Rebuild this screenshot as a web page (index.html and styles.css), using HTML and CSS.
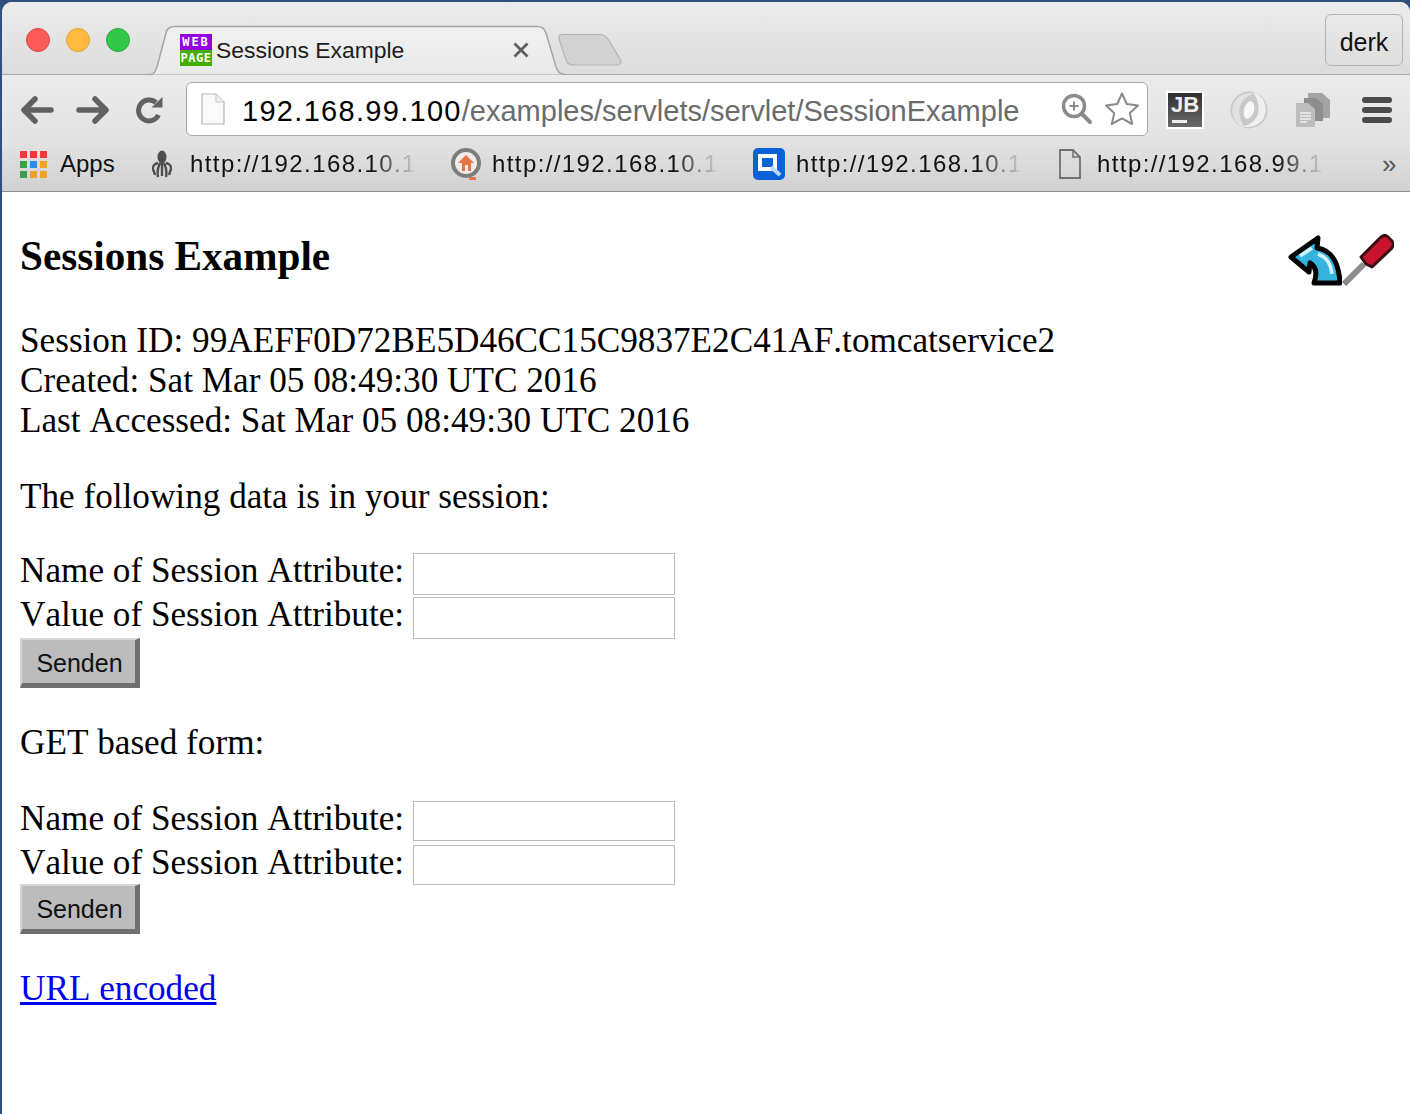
FILE: index.html
```html
<!DOCTYPE html>
<html lang="en">
<head>
    <meta charset="UTF-8">
    <title>Sessions Example</title>
    <link rel="stylesheet" href="styles.css">
</head>
<body>
<div class="window">
    <div class="tabstrip">
        <div class="lights">
            <span class="light red"></span>
            <span class="light yellow"></span>
            <span class="light green"></span>
        </div>
        <div class="tab">
            <svg class="tab-shape" width="416" height="51" viewBox="0 0 416 51">
                <path d="M0 49.500 H1 C5 49.500 6 47 8 42 L17 8 C18 3 21 1.500 26 1.500 H388 C393 1.500 395 3 397 8 L407 42 C409 47 411 49.500 416 49.500" fill="url(#tabfill)" stroke="#a5a5a5" stroke-width="1.500"/>
                <defs>
                    <linearGradient id="tabfill" x1="0" y1="0" x2="0" y2="1">
                        <stop offset="0" stop-color="#f1f1f1"/>
                        <stop offset="1" stop-color="#e9e9e9"/>
                    </linearGradient>
                </defs>
            </svg>
            <div class="favicon">
                <span class="fav-web">WEB</span>
                <span class="fav-page">PAGE</span>
            </div>
            <span class="tab-title">Sessions Example</span>
            <svg class="tab-close" width="16" height="16" viewBox="0 0 16 16">
                <path d="M1.500 1.500 L14.500 14.500 M14.500 1.500 L1.500 14.500" stroke="#5f5f5f" stroke-width="2.800"/>
            </svg>
        </div>
        <svg class="newtab" width="66" height="34" viewBox="0 0 66 34">
            <path d="M2 6 C1.500 3 3 1.500 6 1.500 H42 C47 1.500 49 3 51 6 L63 26 C65 30 63 32 60 32 H16 C12 32 10 30 9 27 Z" fill="#d2d2d2" stroke="#b2b2b2" stroke-width="1.200"/>
        </svg>
        <div class="profile">derk</div>
    </div>

    <div class="toolbar">
        <svg class="nav-icon" width="34" height="28" viewBox="0 0 34 28">
            <path d="M15 3 L4 14 L15 25 M5 14 H31" fill="none" stroke="#616161" stroke-width="5.500" stroke-linecap="round" stroke-linejoin="round"/>
        </svg>
        <svg class="nav-icon" width="34" height="28" viewBox="0 0 34 28">
            <path d="M19 3 L30 14 L19 25 M29 14 H3" fill="none" stroke="#616161" stroke-width="5.500" stroke-linecap="round" stroke-linejoin="round"/>
        </svg>
        <svg class="nav-icon" width="30" height="28" viewBox="0 0 30 28">
            <path d="M23.500 19 A10.500 10.500 0 1 1 21 6.500" fill="none" stroke="#616161" stroke-width="5"/>
            <path d="M16.500 11.500 L27.500 11.500 L27.500 1 Z" fill="#616161"/>
        </svg>
        <div class="omnibox">
            <svg class="omni-doc" width="24" height="32" viewBox="0 0 24 32">
                <path d="M1 1 H15 L23 9 V31 H1 Z" fill="#fafafa" stroke="#b5b5b5" stroke-width="1.200"/>
                <path d="M15 1 V9 H23" fill="#eee" stroke="#c5c5c5" stroke-width="1"/>
            </svg>
            <div class="url"><span class="host">192.168.99.100</span>/examples/servlets/servlet/SessionExample</div>
            <svg class="zoom-icon" width="32" height="32" viewBox="0 0 32 32">
                <circle cx="13" cy="13" r="10.500" fill="none" stroke="#8b8b8b" stroke-width="3.500"/>
                <path d="M21 21 L29 29" stroke="#8b8b8b" stroke-width="4" stroke-linecap="round"/>
                <path d="M13 8.500 V17.500 M8.500 13 H17.500" stroke="#8b8b8b" stroke-width="2"/>
            </svg>
            <svg class="star-icon" width="36" height="36" viewBox="0 0 36 36">
                <path d="M18 2.500 L22.800 13 L34 14.500 L25.800 22 L28.200 33 L18 27.400 L7.800 33 L10.200 22 L2 14.500 L13.200 13 Z" fill="#fff" stroke="#8a8a8a" stroke-width="2" stroke-linejoin="round"/>
            </svg>
        </div>
        <div class="extensions">
            <div class="ext-jb">
                <span class="jb-text">JB</span>
                <span class="jb-bar"></span>
            </div>
            <svg class="ext-json" width="38" height="38" viewBox="0 0 38 38">
                <circle cx="19" cy="19" r="18.500" fill="#c9c9c9"/>
                <path d="M23 1 C35 5 39 18 33 28 C29 34 20 38 12 35 C21 35 30 26 28.500 16 C28 10 26 5 23 1 Z" fill="#f0f0f0"/>
                <path d="M15 37 C3 33 -1 20 5 10 C9 4 18 0 26 3 C17 3 8 12 9.500 22 C10 28 12 33 15 37 Z" fill="#e2e2e2"/>
                <ellipse cx="19" cy="19" rx="5" ry="9" transform="rotate(15 19 19)" fill="#f7f7f7"/>
            </svg>
            <svg class="ext-copy" width="34" height="34" viewBox="0 0 34 34">
                <path d="M12 0 H26 L34 7 V25 H12 Z" fill="#a3a3a3"/>
                <path d="M8 5 H20 L27 11 V28 H8 Z" fill="#8e8e8e"/>
                <path d="M0 10 H12 L19 16 V34 H0 Z" fill="#bdbdbd"/>
                <path d="M4 20 H15 M4 23 H15 M4 26 H15 M4 29 H11" stroke="#eee" stroke-width="1.500"/>
            </svg>
            <div class="menu-icon"><span></span><span></span><span></span></div>
        </div>
    </div>

    <div class="bookmarks">
        <div class="bm bm-apps">
            <div class="apps-grid">
                <i class="c-r"></i><i class="c-r"></i><i class="c-r"></i>
                <i class="c-g"></i><i class="c-b"></i><i class="c-y"></i>
                <i class="c-g"></i><i class="c-y"></i><i class="c-y"></i>
            </div>
            <span>Apps</span>
        </div>
        <div class="bm bm-one">
            <svg width="20" height="28" viewBox="0 0 20 28">
                <ellipse cx="10" cy="7" rx="4.500" ry="6.500" fill="#4d4d4d"/>
                <path d="M6 13 C3 14 0.500 15 1 19 C1.500 22 3 22 2.500 25 M14 13 C17 14 19.500 15 19 19 C18.500 22 17 22 17.500 25 M8 13 C6 17 5 22 6 27 M12 13 C14 17 15 22 14 27 M10 12 V26" fill="none" stroke="#4d4d4d" stroke-width="2.400"/>
            </svg>
            <span class="bm-text">http://192.168.10.11</span>
        </div>
        <div class="bm bm-two">
            <svg width="32" height="34" viewBox="0 0 32 34">
                <circle cx="16" cy="16" r="13" fill="#f1ece8" stroke="#7d7d7d" stroke-width="4"/>
                <path d="M8 16 L16 8 L24 16 H21 V24 H18 V18 H15 V24 H12 V16 Z" fill="#e5744a"/>
                <path d="M19 30 H26 V33 H19 Z" fill="#e5744a"/>
            </svg>
            <span class="bm-text">http://192.168.10.11</span>
        </div>
        <div class="bm bm-three">
            <svg width="32" height="32" viewBox="0 0 32 32">
                <rect width="32" height="32" rx="5" fill="#0a62d8"/>
                <rect x="7" y="8" width="15" height="13" fill="none" stroke="#fff" stroke-width="4"/>
                <path d="M18 19 L27 27" stroke="#bcd6fa" stroke-width="4"/>
            </svg>
            <span class="bm-text">http://192.168.10.10</span>
        </div>
        <div class="bm bm-four">
            <svg width="22" height="30" viewBox="0 0 22 30">
                <path d="M1 1 H14 L21 8 V29 H1 Z" fill="none" stroke="#6f6f6f" stroke-width="1.800"/>
                <path d="M14 1 V8 H21" fill="none" stroke="#6f6f6f" stroke-width="1.500"/>
            </svg>
            <span class="bm-text">http://192.168.99.10</span>
        </div>
        <span class="bm-more">»</span>
    </div>

    <div class="page">
        <div class="icons">
            <svg width="54" height="52" viewBox="0 0 54 52">
                <path d="M3 23 L30 4 L29 14 C44 16 51 30 52 49 H26 C30 38 27 32 22 29 L21 38 Z" fill="#35b4df" stroke="#000" stroke-width="5" stroke-linejoin="round"/>
                <path d="M12 22 L24 14 M30 20 C38 23 43 30 44 40" fill="none" stroke="#d2f2fc" stroke-width="3.500"/>
            </svg>
            <svg width="52" height="52" viewBox="0 0 52 52">
                <path d="M2 50 L22 30" stroke="#8b8b8b" stroke-width="6"/>
                <path d="M19 23 L38 4 C41 1 44 1 46 3 L50 7 C52 10 52 12 49 15 L30 33 L24 30 Z" fill="#c8142c" stroke="#3a1015" stroke-width="3" stroke-linejoin="round"/>
            </svg>
        </div>
        <h1>Sessions Example</h1>
        <p class="info">Session ID: 99AEFF0D72BE5D46CC15C9837E2C41AF.tomcatservice2<br>Created: Sat Mar 05 08:49:30 UTC 2016<br>Last Accessed: Sat Mar 05 08:49:30 UTC 2016</p>
        <p class="note">The following data is in your session:</p>
        <form class="attr-form first" onsubmit="return false">
            <div class="row"><label>Name of Session Attribute:</label><input type="text"></div>
            <div class="row"><label>Value of Session Attribute:</label><input type="text"></div>
            <button type="submit">Senden</button>
        </form>
        <p class="note get-note">GET based form:</p>
        <form class="attr-form second" onsubmit="return false">
            <div class="row"><label>Name of Session Attribute:</label><input type="text"></div>
            <div class="row"><label>Value of Session Attribute:</label><input type="text"></div>
            <button type="submit">Senden</button>
        </form>
        <p class="link-line"><a href="#">URL encoded</a></p>
    </div>
</div>
</body>
</html>
```

FILE: styles.css
```css
html, body {
    margin: 0;
    padding: 0;
    height: 100%;
    overflow: hidden;
}
body {
    background-color: #2f4f7d; /* desktop behind the window */
    font-family: "Liberation Sans", Arial, sans-serif;
}
.window {
    margin: 2px 0 0 2px;
    height: 1112px;
    background-color: #fff;
    border-radius: 10px 10px 0 0;
    overflow: hidden;
}

/* Tab strip */
.tabstrip {
    height: 73px;
    display: flex;
    align-items: flex-start;
    position: relative;
    background: linear-gradient(#ececec, #dcdcdc);
    border-bottom: 1px solid #a9a9a9;
    box-sizing: border-box;
}
.lights {
    display: flex;
    gap: 16px;
    padding: 26px 0 0 24px;
}
.light {
    width: 24px;
    height: 24px;
    border-radius: 50%;
    box-sizing: border-box;
}
.red { background-color: #fc5b57; border: 1px solid #e2463f; }
.yellow { background-color: #fdbc40; border: 1px solid #e0a028; }
.green { background-color: #33c748; border: 1px solid #27aa35; }
.tab {
    position: relative;
    width: 416px;
    height: 49px;
    margin: 23px 0 0 19px;
    display: flex;
    align-items: center;
}
.tab-shape {
    position: absolute;
    left: 0;
    top: 0;
}
.favicon {
    position: relative;
    margin-left: 31px;
    width: 32px;
    height: 32px;
    display: flex;
    flex-direction: column;
    font-family: "DejaVu Sans Mono", monospace;
    font-weight: bold;
    color: #fff;
    text-align: center;
    overflow: hidden;
}
.favicon span {
    height: 16px;
    font-size: 12px;
    line-height: 16px;
}
.fav-web { background-color: #9400e0; letter-spacing: 2px; }
.fav-page { background-color: #46ae00; letter-spacing: 0.500px; }
.tab-title {
    position: relative;
    margin-left: 4px;
    margin-top: 2px;
    width: 297px;
    font-size: 22.900px;
    color: #1c1c1c;
}
.tab-close {
    position: relative;
}
.newtab {
    margin: 31px 0 0 -8px;
}
.profile {
    margin: 12px 7px 0 auto;
    width: 78px;
    height: 52px;
    box-sizing: border-box;
    border: 1px solid #b4b4b4;
    border-radius: 6px;
    font-size: 25px;
    line-height: 54px;
    text-align: center;
    color: #111;
}

/* Toolbar */
.toolbar {
    height: 70px;
    display: flex;
    align-items: center;
    background: linear-gradient(#ebebeb, #e2e2e2);
    box-sizing: border-box;
}
.nav-icon {
    flex: none;
    margin-left: 18px;
}
.nav-icon + .nav-icon {
    margin-left: 22px;
}
.nav-icon + .nav-icon + .nav-icon {
    margin-left: 25px;
}
.omnibox {
    flex: none;
    margin: -2px 0 0 21px;
    width: 962px;
    height: 54px;
    box-sizing: border-box;
    background-color: #fff;
    border: 1px solid #a9a9a9;
    border-radius: 6px;
    display: flex;
    align-items: center;
}
.omni-doc {
    margin-left: 14px;
}
.url {
    margin-left: 17px;
    padding-top: 4px;
    width: 819px;
    font-size: 29px;
    color: #6b6b6b;
    white-space: nowrap;
}
.host {
    color: #000;
    letter-spacing: 1.300px;
}
.star-icon {
    margin-left: 11px;
}
.extensions {
    flex: 1;
    display: flex;
    align-items: center;
    padding-left: 18px;
}
.ext-jb {
    width: 38px;
    height: 38px;
    box-sizing: border-box;
    border: 2px solid #fff;
    background: linear-gradient(#2f2f2f, #6a6a6a);
    color: #fff;
    position: relative;
}
.jb-text {
    display: block;
    font-size: 22px;
    font-weight: bold;
    line-height: 24px;
    padding-left: 3px;
    color: #eee;
}
.jb-bar {
    display: block;
    width: 15px;
    height: 3px;
    margin: 3px 0 0 4px;
    background-color: #eee;
}
.ext-json {
    margin-left: 26px;
}
.ext-copy {
    margin-left: 28px;
}
.menu-icon {
    display: flex;
    flex-direction: column;
    gap: 4px;
    margin-left: 32px;
}
.menu-icon span {
    display: block;
    width: 30px;
    height: 6px;
    border-radius: 3px;
    background-color: #4a4a4a;
}

/* Bookmarks bar */
.bookmarks {
    height: 47px;
    padding-bottom: 8px;
    display: flex;
    align-items: center;
    background: linear-gradient(#e1e1e1, #d1d1d1);
    border-bottom: 1px solid #8f8f8f;
    box-sizing: border-box;
    font-size: 24px;
    color: #111;
    letter-spacing: 1.400px;
}
.bm {
    display: flex;
    align-items: center;
    flex: none;
}
.bm svg {
    flex: none;
}
.bm-text {
    display: block;
    overflow: hidden;
    white-space: nowrap;
    width: 232px;
    -webkit-mask-image: linear-gradient(to right, #000 78%, transparent 98%);
    mask-image: linear-gradient(to right, #000 78%, transparent 98%);
}
.bm-apps {
    margin-left: 18px;
    width: 132px;
    gap: 13px;
    letter-spacing: 0;
}
.apps-grid {
    display: grid;
    grid-template-columns: repeat(3, 7px);
    grid-auto-rows: 7px;
    gap: 3px;
}
.apps-grid i {
    display: block;
}
.c-r { background-color: #ee3a3a; }
.c-g { background-color: #3f9d52; }
.c-b { background-color: #2d8cf0; }
.c-y { background-color: #efa22a; }
.bm-one { width: 298px; gap: 18px; }
.bm-two { width: 303px; gap: 10px; }
.bm-three { width: 306px; gap: 11px; }
.bm-four { width: 323px; gap: 16px; }
.bm-more {
    font-size: 26px;
    color: #555;
    letter-spacing: 0;
}

/* Page content */
.page {
    padding: 0 16px 0 18px;
    font-family: "Liberation Serif", "Times New Roman", serif;
    font-size: 35.200px;
    line-height: 40px;
    font-kerning: none;
    color: #000;
}
.icons {
    float: right;
    display: flex;
    margin-top: 42px;
    filter: blur(0.7px);
}
h1 {
    margin: 0;
    padding-top: 41px;
    font-size: 41.200px;
    line-height: 46px;
}
.info {
    margin: 42px 0 0;
}
.note {
    margin: 36px 0 0;
}
.attr-form {
    margin: 0;
}
.first {
    margin-top: 33px;
}
.second {
    margin-top: 35px;
}
.row {
    display: flex;
    align-items: flex-start;
    height: 44px;
}
.row label {
    width: 393px;
    margin-top: 1px;
    white-space: nowrap;
}
.row input {
    width: 262px;
    height: 42px;
    box-sizing: border-box;
    border: 1px solid #bdbdbd;
    background-color: #fff;
    margin: 3px 0 0;
    padding: 0;
}
.second .row input {
    height: 40px;
}
.attr-form button {
    display: block;
    width: 120px;
    height: 50px;
    margin: 0;
    padding: 4px 0 0 2px;
    box-sizing: border-box;
    border-width: 2px 5px 5px 2px;
    border-style: solid;
    border-color: #d6d6d6 #6f6f6f #6f6f6f #d6d6d6;
    background-color: #bcbcbc;
    font-family: "Liberation Sans", Arial, sans-serif;
    font-size: 25px;
    color: #111;
}
.second button {
    margin-top: -2px;
}
.get-note {
    margin-top: 35px;
}
.link-line {
    margin: 35px 0 0;
}
```
